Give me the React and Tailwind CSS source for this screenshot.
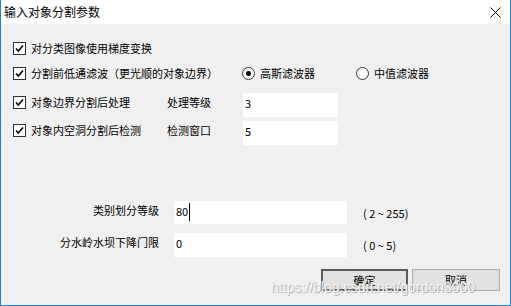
import React from 'react';

function Check({ label, width }) {
  return (
    <div className={`flex items-center h-[18px] ${width}`}>
      <span className="w-[13px] h-[13px] border border-[#333] bg-white flex items-center justify-center shrink-0">
        <svg width="11" height="11" viewBox="0 0 11 11">
          <path d="M2 5.5 L4.3 8 L9 2.5" fill="none" stroke="#000" strokeWidth="1.6" />
        </svg>
      </span>
      <span className="ml-[5px] whitespace-nowrap">{label}</span>
    </div>
  );
}

function Radio({ label, checked, width }) {
  return (
    <div className={`flex items-center h-[18px] ${width}`}>
      <span className="w-[13px] h-[13px] rounded-full border border-[#333] bg-white flex items-center justify-center shrink-0">
        {checked && <span className="w-[5px] h-[5px] rounded-full bg-black" />}
      </span>
      <span className="ml-[5px] whitespace-nowrap">{label}</span>
    </div>
  );
}

function Field({ value, w, h, cursor }) {
  return (
    <div className={`bg-white ${w} ${h} pl-[2px] pt-[2px] flex items-start shrink-0`}>
      <span>{value}</span>
      {cursor && <span className="w-px h-[18px] bg-black ml-[1px]" />}
    </div>
  );
}

export default function App() {
  return (
    <div className="w-[511px] h-[306px] bg-[#f0f0f0] border-x border-b border-[#1883d7] flex flex-col relative overflow-hidden font-['Noto_Sans_CJK_SC',sans-serif] text-[11px] leading-[16px] text-black">
      {/* title bar */}
      <div className="h-[24px] bg-white flex items-center justify-between pl-[3px] pr-[9px] shrink-0">
        <span className="text-[12px]">输入对象分割参数</span>
        <svg width="11" height="11" viewBox="0 0 11 11">
          <path d="M0.5 0.5 L10.5 10.5 M10.5 0.5 L0.5 10.5" stroke="#000" strokeWidth="1" />
        </svg>
      </div>

      <div className="flex flex-col pl-[12px] pt-[14px]">
        <div className="flex items-center h-[20px]">
          <Check label="对分类图像使用梯度变换" width="w-[229px]" />
        </div>

        <div className="flex items-center h-[20px] mt-[5px]">
          <Check label="分割前低通滤波（更光顺的对象边界）" width="w-[229px]" />
          <Radio label="高斯滤波器" checked width="w-[114px]" />
          <Radio label="中值滤波器" />
        </div>

        <div className="flex items-start mt-[10px]">
          <Check label="对象边界分割后处理" width="w-[154px]" />
          <div className="w-[76px] h-[18px] flex items-center">处理等级</div>
          <Field value="3" w="w-[95px]" h="h-[24px]" />
        </div>

        <div className="flex items-start mt-[4px]">
          <Check label="对象内空洞分割后检测" width="w-[154px]" />
          <div className="w-[76px] h-[18px] flex items-center">检测窗口</div>
          <Field value="5" w="w-[95px]" h="h-[24px]" />
        </div>

        <div className="flex items-center mt-[56px]">
          <div className="w-[146px] text-right self-start pt-[1px]">类别划分等级</div>
          <div className="ml-[15px]">
            <Field value="80" w="w-[173px]" h="h-[23px]" cursor />
          </div>
          <div className="ml-[16px]">( 2 ~ 255)</div>
        </div>

        <div className="flex items-center mt-[9px]">
          <div className="w-[146px] text-right whitespace-nowrap self-start pt-[1px]">分水岭水坝下降门限</div>
          <div className="ml-[15px]">
            <Field value="0" w="w-[173px]" h="h-[24px]" />
          </div>
          <div className="ml-[16px]">( 0 ~ 5)</div>
        </div>

        <div className="flex justify-end gap-[4px] pr-[10px] mt-[12px]">
          <button className="w-[87px] h-[22px] bg-[#e1e1e1] border-2 border-[#5a5a5a] flex items-center justify-center">
            确定
          </button>
          <button className="w-[88px] h-[22px] bg-[#e1e1e1] border border-[#adadad] flex items-center justify-center">
            取消
          </button>
        </div>
      </div>

      {/* watermark */}
      <div className="absolute left-[270px] top-[279px] font-['Liberation_Sans',sans-serif] text-[14px] leading-[16px] text-[#f4f4f4] [text-shadow:1px_1px_1px_#a8a8a8] pointer-events-none">
        https://blog.csdn.net/gordon3000
      </div>
    </div>
  );
}
